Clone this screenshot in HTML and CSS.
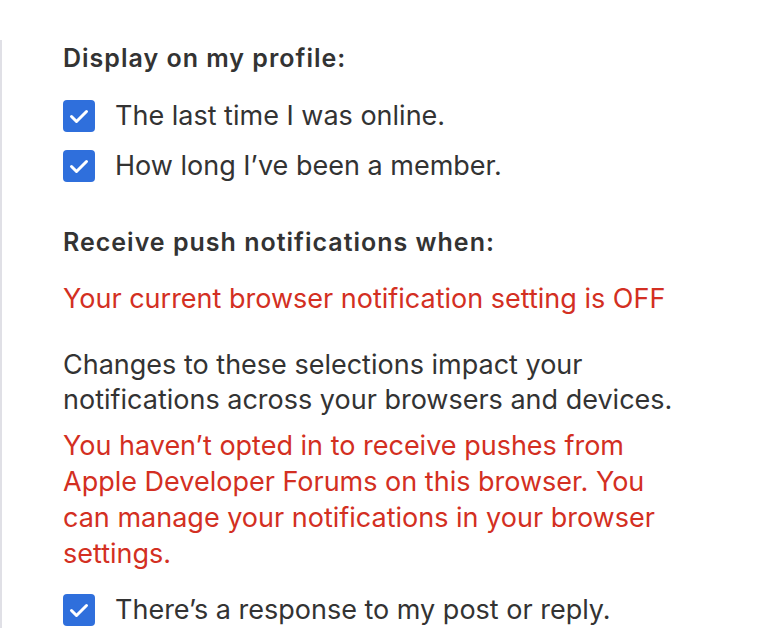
FILE: index.html
```html
<!DOCTYPE html>
<html lang="en">
<head>
  <meta charset="UTF-8" />
  <title>Preferences</title>
  <link rel="stylesheet" href="styles.css">
</head>
<body>
  <div class="panel">
    <section class="group">
      <h2>Display on my profile:</h2>
      <label class="check"><span class="box"><svg viewBox="0 0 32 32"><path d="M8.5 16.5l5 5 10-10"/></svg></span>The last time I was online.</label>
      <label class="check"><span class="box"><svg viewBox="0 0 32 32"><path d="M8.5 16.5l5 5 10-10"/></svg></span>How long I’ve been a member.</label>
    </section>

    <section class="group push">
      <h2>Receive push notifications when:</h2>
      <p class="warn off">Your current browser notification setting is OFF</p>
      <p class="note">Changes to these selections impact your notifications across your browsers and devices.</p>
      <p class="warn">You haven’t opted in to receive pushes from Apple Developer Forums on this browser. You can manage your notifications in your browser settings.</p>
      <label class="check"><span class="box"><svg viewBox="0 0 32 32"><path d="M8.5 16.5l5 5 10-10"/></svg></span>There’s a response to my post or reply.</label>
    </section>
  </div>
</body>
</html>
```

FILE: styles.css
```css
* {
  margin: 0;
  padding: 0;
  box-sizing: border-box;
}

body {
  font-family: Inter, 'Noto Sans', sans-serif;
  background: #fff;
  color: #333;
  height: 628px;
  overflow: hidden;
}

.panel {
  margin-top: 40px;
  border-left: 2px solid #e0e0e6;
  padding: 2px 0 0 61px;
  min-height: 600px;
}

h2 {
  font-size: 25px;
  font-weight: 600;
  line-height: 32px;
  letter-spacing: 1px;
  margin-bottom: 17px;
}

.check {
  display: flex;
  align-items: center;
  gap: 20px;
  font-size: 27px;
  line-height: 32px;
  height: 50px;
}

.box {
  flex: none;
  width: 32px;
  height: 32px;
  border-radius: 4px;
  background: #2f6fdc;
  display: flex;
}

.box svg {
  width: 32px;
  height: 32px;
  fill: none;
  stroke: #fff;
  stroke-width: 3;
  stroke-linecap: round;
  stroke-linejoin: round;
}

.push {
  margin-top: 35px;
}

.warn {
  color: #d32f22;
  font-size: 27px;
  line-height: 36px;
  margin-bottom: 13px;
  max-width: 612px;
}

.warn.off {
  margin-top: 23px;
  margin-bottom: 30px;
}

.note {
  font-size: 27px;
  line-height: 35px;
  max-width: 612px;
  margin-bottom: 11px;
}
```
